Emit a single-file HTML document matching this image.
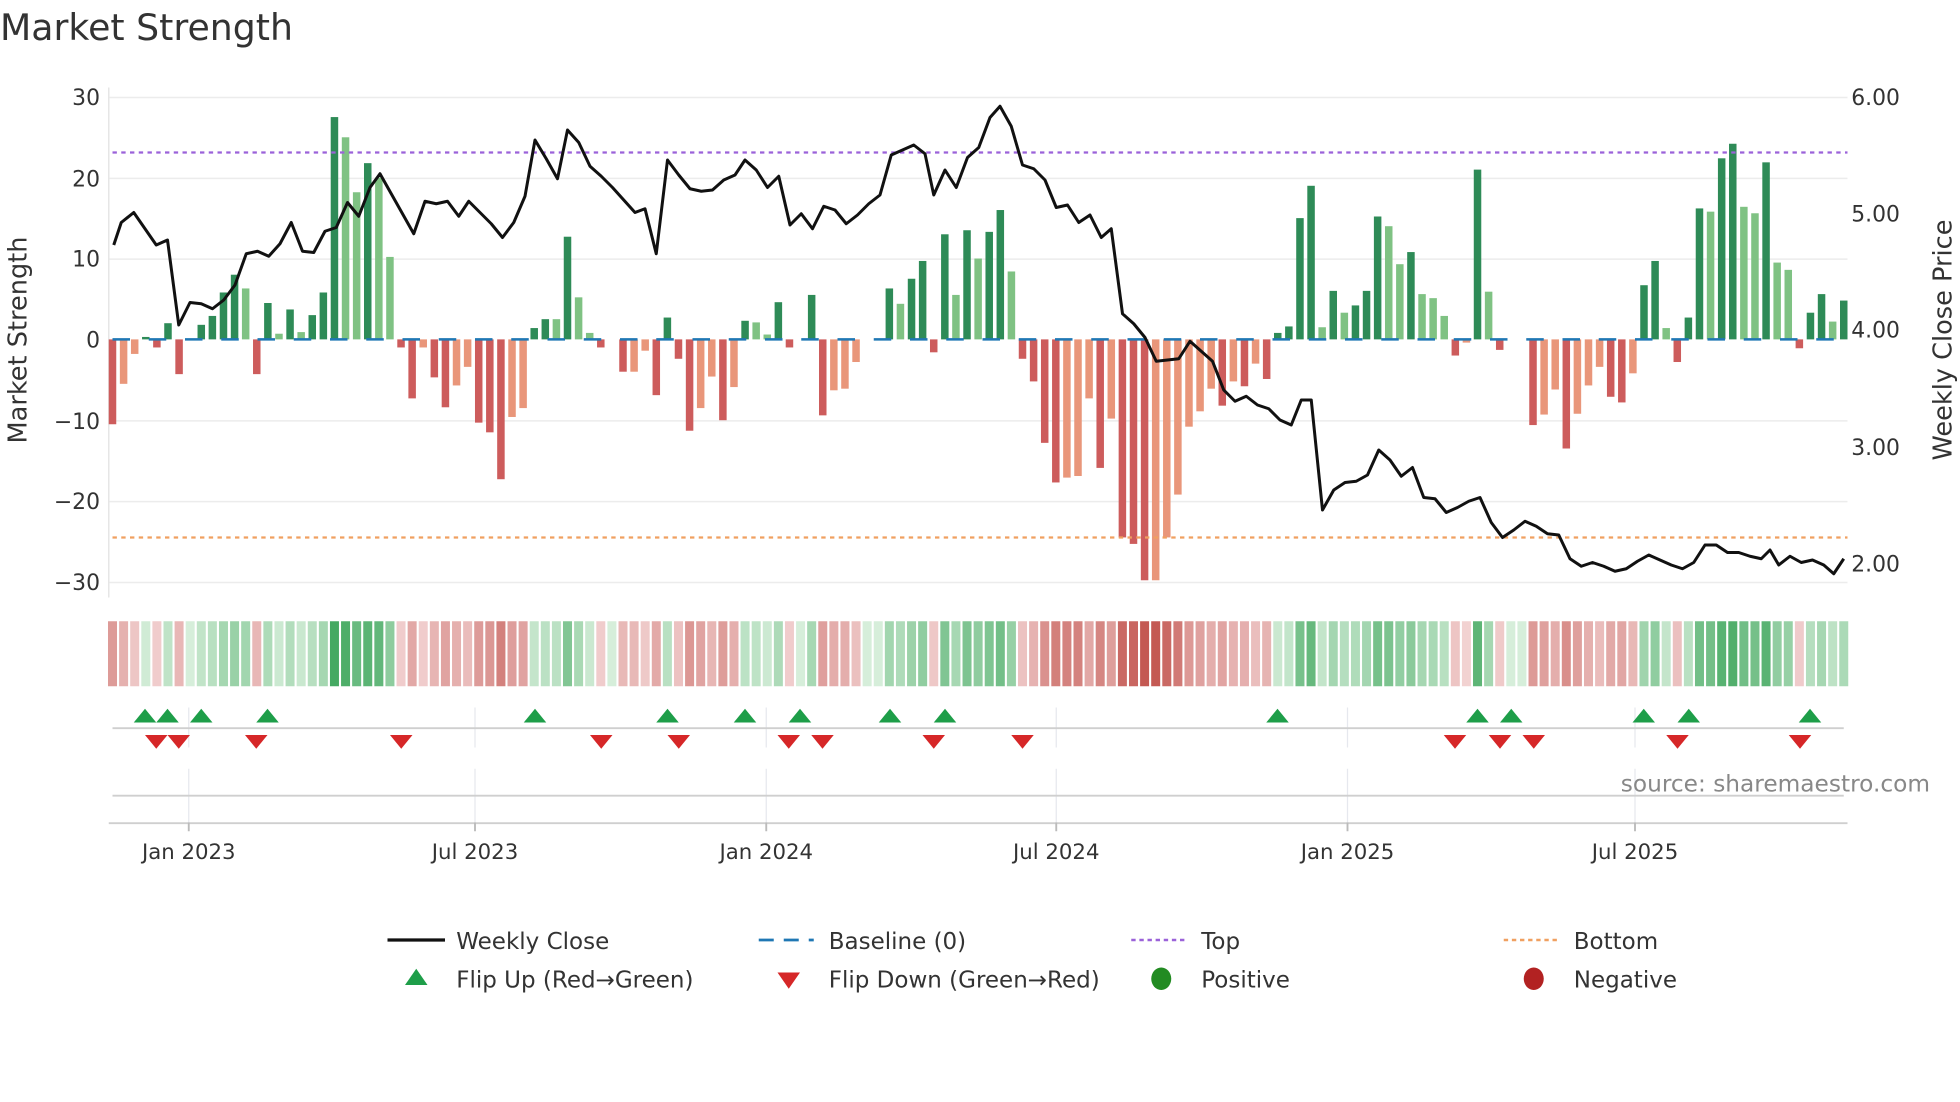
<!DOCTYPE html>
<html><head><meta charset="utf-8"><style>
html,body{margin:0;padding:0;background:#fff;}
svg{display:block;font-family:"DejaVu Sans","Liberation Sans",sans-serif;}
</style></head><body>
<svg id="c" width="1960" height="1102" viewBox="0 0 1568 881.6" xmlns="http://www.w3.org/2000/svg">
<rect width="1568" height="882" fill="#fff"/>
<text x="0" y="32" font-size="29" fill="#333">Market Strength</text>
<g id="grid" stroke="#ececec" stroke-width="1.2">
<line x1="87" y1="78" x2="1478" y2="78"/><line x1="87" y1="142.7" x2="1478" y2="142.7"/>
<line x1="87" y1="207.3" x2="1478" y2="207.3"/><line x1="87" y1="336.7" x2="1478" y2="336.7"/>
<line x1="87" y1="401.3" x2="1478" y2="401.3"/><line x1="87" y1="466" x2="1478" y2="466"/>
</g>
<line x1="87" y1="70" x2="87" y2="478" stroke="#e6e6e6" stroke-width="1.2"/>
<g font-size="17.5" fill="#333" text-anchor="end">
<text x="80" y="84">30</text><text x="80" y="149">20</text><text x="80" y="213">10</text>
<text x="80" y="278">0</text><text x="80" y="343">−10</text><text x="80" y="407">−20</text><text x="80" y="472">−30</text>
</g>
<g font-size="17.5" fill="#333">
<text x="1481" y="84">6.00</text><text x="1481" y="177">5.00</text><text x="1481" y="270">4.00</text>
<text x="1481" y="364">3.00</text><text x="1481" y="457">2.00</text>
</g>
<text transform="translate(21,272) rotate(-90)" font-size="20.5" fill="#333" text-anchor="middle">Market Strength</text>
<text transform="translate(1561,272) rotate(-90)" font-size="20.5" fill="#333" text-anchor="middle">Weekly Close Price</text>
<g id="bars"></g>
<line x1="90" y1="271.5" x2="1478" y2="271.5" stroke="#1f77b4" stroke-width="2" stroke-dasharray="14 15"/>
<line x1="90" y1="122" x2="1478" y2="122" stroke="#9b62d9" stroke-width="1.8" stroke-dasharray="3.5 3.5"/>
<line x1="90" y1="430" x2="1478" y2="430" stroke="#f0a060" stroke-width="1.8" stroke-dasharray="3.5 3.5"/>
<polyline id="price" fill="none" stroke="#111" stroke-width="2.4" stroke-linejoin="round"/>
<g id="strip"></g>
<g stroke="#e6e8ee" stroke-width="1">
<line x1="151" y1="566" x2="151" y2="598"/><line x1="380" y1="566" x2="380" y2="598"/><line x1="613" y1="566" x2="613" y2="598"/><line x1="845" y1="566" x2="845" y2="598"/><line x1="1078" y1="566" x2="1078" y2="598"/><line x1="1308" y1="566" x2="1308" y2="598"/>
<line x1="151" y1="615" x2="151" y2="658"/><line x1="380" y1="615" x2="380" y2="658"/><line x1="613" y1="615" x2="613" y2="658"/><line x1="845" y1="615" x2="845" y2="658"/><line x1="1078" y1="615" x2="1078" y2="658"/><line x1="1308" y1="615" x2="1308" y2="658"/>
</g>
<line x1="90" y1="582.5" x2="1475" y2="582.5" stroke="#cfcfcf" stroke-width="1.5"/>
<line x1="90" y1="636.5" x2="1475" y2="636.5" stroke="#cfcfcf" stroke-width="1.5"/>
<line x1="87" y1="658.5" x2="1478" y2="658.5" stroke="#cfcfcf" stroke-width="1.5"/>
<g stroke="#bbb" stroke-width="1.5">
<line x1="151" y1="658" x2="151" y2="665"/><line x1="380" y1="658" x2="380" y2="665"/><line x1="613" y1="658" x2="613" y2="665"/><line x1="845" y1="658" x2="845" y2="665"/><line x1="1078" y1="658" x2="1078" y2="665"/><line x1="1308" y1="658" x2="1308" y2="665"/>
</g>
<g id="marks"></g>
<text x="1544" y="633" font-size="18.6" fill="#888" text-anchor="end">source: sharemaestro.com</text>
<g font-size="17" fill="#333" text-anchor="middle">
<text x="151" y="687">Jan 2023</text><text x="380" y="687">Jul 2023</text><text x="613" y="687">Jan 2024</text>
<text x="845" y="687">Jul 2024</text><text x="1078" y="687">Jan 2025</text><text x="1308" y="687">Jul 2025</text>
</g>
<g font-size="18.4" fill="#333">
<line x1="310" y1="752" x2="356" y2="752" stroke="#111" stroke-width="2.6"/>
<text x="365" y="759">Weekly Close</text>
<line x1="607" y1="752" x2="651" y2="752" stroke="#1f77b4" stroke-width="2.2" stroke-dasharray="12 8"/>
<text x="663" y="759">Baseline (0)</text>
<line x1="905" y1="752" x2="950" y2="752" stroke="#9b62d9" stroke-width="2" stroke-dasharray="3.5 3"/>
<text x="961" y="759">Top</text>
<line x1="1203" y1="752" x2="1248" y2="752" stroke="#f0a060" stroke-width="2" stroke-dasharray="3.5 3"/>
<text x="1259" y="759">Bottom</text>
<polygon points="324,788 342,788 333,775" fill="#1e9e49"/>
<text x="365" y="790">Flip Up (Red→Green)</text>
<polygon points="622,778 640,778 631,791" fill="#d62728"/>
<text x="663" y="790">Flip Down (Green→Red)</text>
<ellipse cx="929" cy="783" rx="8" ry="9" fill="#228b22"/>
<text x="961" y="790">Positive</text>
<ellipse cx="1227" cy="783" rx="8" ry="9" fill="#b22222"/>
<text x="1259" y="790">Negative</text>
</g>
</svg>
<script>
var V=[-10.5,-5.5,-1.8,0.3,-1,2,-4.3,0,1.8,2.9,5.8,8,6.3,-4.3,4.5,0.7,3.7,0.9,3,5.8,27.5,25,18.2,21.8,20,10.2,-1,-7.3,-1,-4.7,-8.4,-5.7,-3.4,-10.3,-11.5,-17.3,-9.6,-8.5,1.4,2.5,2.5,12.7,5.2,0.8,-1,0,-4,-4,-1.4,-6.9,2.7,-2.4,-11.3,-8.5,-4.6,-10,-5.9,2.3,2.1,0.6,4.6,-1,0,5.5,-9.4,-6.3,-6.1,-2.8,0,0,6.3,4.4,7.5,9.7,-1.6,13,5.5,13.5,10,13.3,16,8.4,-2.4,-5.2,-12.8,-17.7,-17.1,-16.9,-7.3,-15.9,-9.8,-24.5,-25.3,-29.8,-29.8,-24.5,-19.2,-10.8,-8.9,-6.1,-8.2,-5.2,-5.8,-3,-4.9,0.8,1.6,15,19,1.5,6,3.3,4.2,6,15.2,14,9.3,10.8,5.6,5.1,2.9,-2,-0.4,21,5.9,-1.3,0,0,-10.6,-9.3,-6.2,-13.5,-9.2,-5.7,-3.4,-7.1,-7.8,-4.2,6.7,9.7,1.4,-2.8,2.7,16.2,15.8,22.4,24.2,16.4,15.6,21.9,9.5,8.6,-1.1,3.3,5.6,2.2,4.8];
var ns="http://www.w3.org/2000/svg",n=V.length,st=(1475-90)/(n-1),sc=6.467,z=271.5;
var B=document.getElementById('bars'),S=document.getElementById('strip');
function el(t,a,p){var e=document.createElementNS(ns,t);for(var k in a)e.setAttribute(k,a[k]);p.appendChild(e);return e;}
function mix(a,b,t){return 'rgb('+a.map(function(x,i){return Math.round(x+(b[i]-x)*t)}).join(',')+')';}
for(var i=0;i<n;i++){var v=V[i],p=i?V[i-1]:0,x=90+i*st,c;
 if(v>=0)c=(v>p)?'#2e8b57':'#7fc283';else c=(v<p)?'#cd5c5c':'#e9967a';
 var h=Math.abs(v)*sc;if(h>0.3)el('rect',{x:x-3,y:v>=0?z-h:z,width:6,height:h,fill:c},B);
 var t=Math.min(Math.abs(v)/30,1);t=Math.pow(t,0.7);
 var col=v>=0?mix([214,238,218],[60,165,90],t):mix([244,216,216],[196,88,82],t);
 el('rect',{x:x-3.6,y:497,width:7.2,height:52,fill:col},S);}
var P=[[91,196],[97,178],[107,170],[116,183],[125,196],[134,192],[143,260],[152,242],[161,243],[170,247],[179,240],[188,228],[197,203],[206,201],[215,205],[224,195],[233,178],[242,201],[251,202],[260,185],[269,182],[278,162],[287,173],[296,150],[304,139],[313,155],[322,171],[331,187],[340,161],[349,163],[358,161],[367,173],[375,161],[384,170],[393,179],[402,190],[411,178],[420,157],[428,112],[437,127],[446,143],[454,104],[463,114],[472,133],[481,141],[490,150],[499,160],[508,170],[516,167],[525,203],[534,128],[543,140],[552,151],[561,153],[570,152],[579,144],[588,140],[596,128],[605,136],[614,150],[623,141],[632,180],[641,171],[650,183],[659,165],[668,168],[677,179],[686,172],[695,163],[704,156],[713,124],[722,120],[731,116],[740,123],[747,156],[756,136],[765,150],[774,126],[783,118],[792,94],[800,85],[809,101],[818,132],[827,135],[836,144],[845,166],[854,164],[863,178],[872,172],[881,190],[889,183],[898,251],[907,259],[916,270],[925,289],[934,288],[943,287],[952,273],[961,281],[970,289],[979,312],[988,321],[997,317],[1006,324],[1015,327],[1024,336],[1033,340],[1041,320],[1049,320],[1058,408],[1067,392],[1076,386],[1085,385],[1094,380],[1103,360],[1112,368],[1121,381],[1130,374],[1139,398],[1148,399],[1157,410],[1166,406],[1175,401],[1184,398],[1193,418],[1202,430],[1211,424],[1220,417],[1229,421],[1238,427],[1247,428],[1256,447],[1265,453],[1274,450],[1283,453],[1292,457],[1301,455],[1310,449],[1319,444],[1328,448],[1337,452],[1346,455],[1355,450],[1364,436],[1373,436],[1382,442],[1391,442],[1400,445],[1409,447],[1416,440],[1423,452],[1432,445],[1441,450],[1450,448],[1459,452],[1467,459],[1475,447]];
document.getElementById('price').setAttribute('points',P.map(function(q){return q.join(',')}).join(' '));
var M=document.getElementById('marks');
[116,134,161,214,428,534,596,640,712,756,1022,1182,1209,1315,1351,1448].forEach(function(x){el('polygon',{points:(x-9)+',578 '+(x+9)+',578 '+x+',567',fill:'#1e9e49'},M);});
[125,143,205,321,481,543,631,658,747,818,1164,1200,1227,1342,1440].forEach(function(x){el('polygon',{points:(x-9)+',588 '+(x+9)+',588 '+x+',599',fill:'#d62728'},M);});
</script>
</body></html>
